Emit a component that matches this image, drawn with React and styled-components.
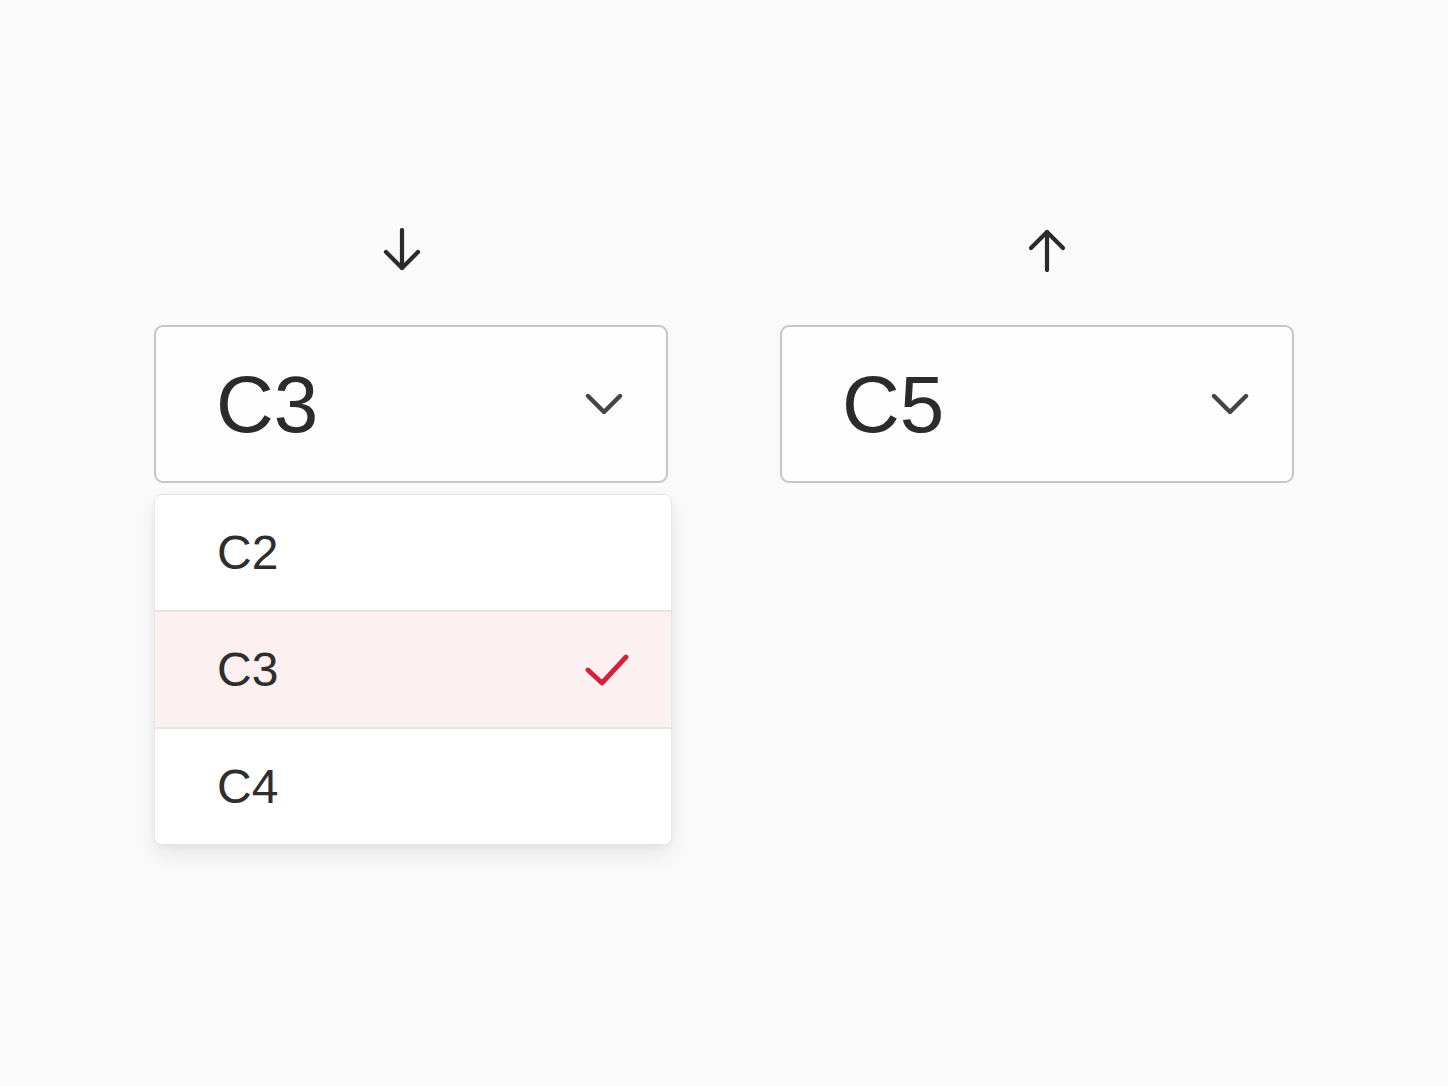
import React from 'react'
import styled, { createGlobalStyle } from 'styled-components'

const GlobalStyle = createGlobalStyle`
    html, body {
        margin: 0;
        padding: 0;
        background: #fafafa;
        font-family: "Liberation Sans", Arial, sans-serif;
        color: #2e2e2e;
    }
`

const Page = styled.div`
    min-height: 1086px;
    display: flex;
    justify-content: center;
    gap: 112px;
    padding-top: 228px;
    box-sizing: border-box;
`
const Column = styled.div`
    width: 514px;
    display: flex;
    flex-direction: column;
`
const ArrowRow = styled.div`
    height: 42px;
    display: flex;
    justify-content: center;
    margin-bottom: 55px;
    transform: translateX(${p => p.$shift}px);
`
const SelectWrap = styled.div`
    position: relative;
`
const SelectBox = styled.div`
    height: 158px;
    box-sizing: border-box;
    border: 2px solid #c6c6c6;
    border-radius: 9px;
    background: #fdfdfd;
    display: flex;
    align-items: center;
    justify-content: space-between;
    padding: 0 43px 0 60px;
`
const SelectValue = styled.span`
    font-size: 80px;
    line-height: 1;
    color: #2b2b2b;
    padding-top: 2px;
`
const Menu = styled.div`
    position: absolute;
    top: 169px;
    left: 0;
    width: calc(100% + 2px);
    background: #fff;
    border: 1px solid #e6e6e6;
    border-radius: 8px;
    box-shadow: 0 10px 22px rgba(0, 0, 0, 0.08), 0 2px 6px rgba(0, 0, 0, 0.04);
    overflow: hidden;
`
const MenuItem = styled.div`
    height: 115px;
    display: flex;
    align-items: center;
    justify-content: space-between;
    padding: 0 42px 0 62px;
    background: ${p => (p.$selected ? '#fcf0f0' : '#fff')};
    & + & {
        border-top: 2px solid #e4e4e4;
    }
`
const ItemLabel = styled.span`
    font-size: 48px;
    line-height: 1;
    color: #2e2e2e;
`

const ArrowDown = () => (
    <svg width="38" height="44" viewBox="0 0 38 44" fill="none" stroke="#2a2a2a" strokeWidth="4.2" strokeLinecap="round" strokeLinejoin="round">
        <path d="M19 2v38" />
        <path d="M3 24l16 16 16-16" />
    </svg>
)

const ArrowUp = () => (
    <svg width="38" height="44" viewBox="0 0 38 44" fill="none" stroke="#2a2a2a" strokeWidth="4.2" strokeLinecap="round" strokeLinejoin="round">
        <path d="M19 42V4" />
        <path d="M3 20L19 4l16 16" />
    </svg>
)

const Chevron = () => (
    <svg width="38" height="24" viewBox="0 0 38 24" fill="none" stroke="#444" strokeWidth="4.4" strokeLinecap="round" strokeLinejoin="round">
        <path d="M3 4l16 16 16-16" />
    </svg>
)

const Check = () => (
    <svg width="44" height="32" viewBox="0 0 44 32" fill="none" stroke="#d4213a" strokeWidth="4.8" strokeLinecap="round" strokeLinejoin="round">
        <path d="M3 16l14 13L41 3" />
    </svg>
)

const options = ['C2', 'C3', 'C4']

const App = () => {
    return (
        <>
            <GlobalStyle />
            <Page>
                <Column>
                    <ArrowRow $shift={-9}><ArrowDown /></ArrowRow>
                    <SelectWrap>
                        <SelectBox>
                            <SelectValue>C3</SelectValue>
                            <Chevron />
                        </SelectBox>
                        <Menu>
                            {options.map(o => (
                                <MenuItem key={o} $selected={o === 'C3'}>
                                    <ItemLabel>{o}</ItemLabel>
                                    {o === 'C3' && <Check />}
                                </MenuItem>
                            ))}
                        </Menu>
                    </SelectWrap>
                </Column>
                <Column>
                    <ArrowRow $shift={10}><ArrowUp /></ArrowRow>
                    <SelectWrap>
                        <SelectBox>
                            <SelectValue>C5</SelectValue>
                            <Chevron />
                        </SelectBox>
                    </SelectWrap>
                </Column>
            </Page>
        </>
    )
}

export default App
